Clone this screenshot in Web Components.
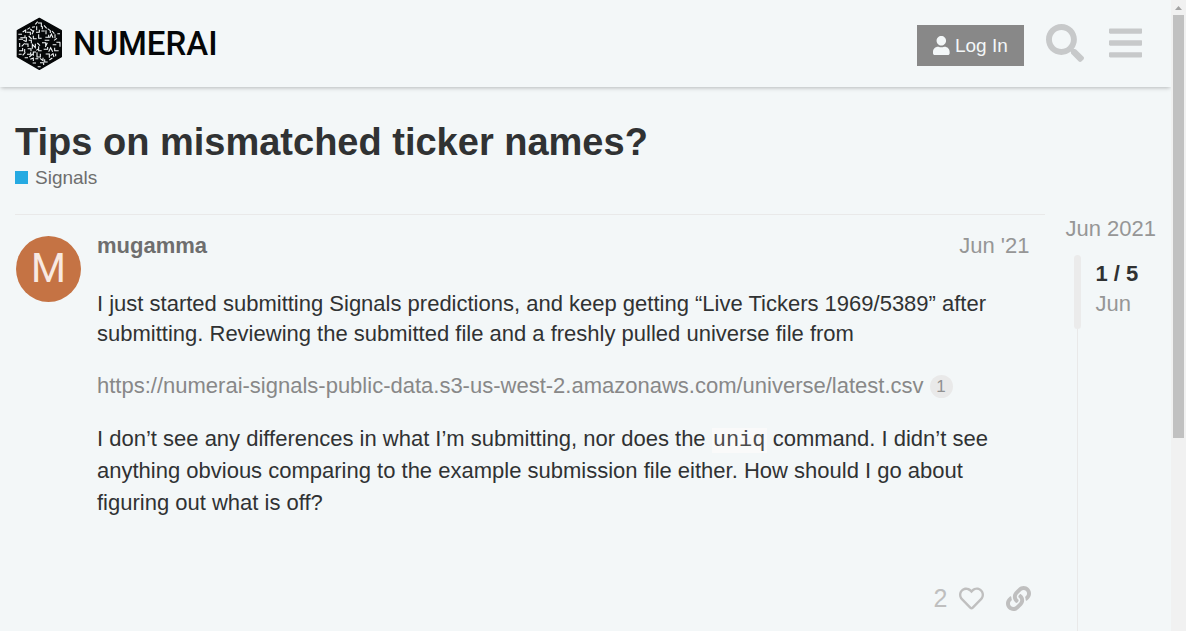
<!DOCTYPE html>
<html lang="en">
<head>
<meta charset="utf-8">
<title>Tips on mismatched ticker names? - Numerai Forum</title>
<style>
  html, body { margin: 0; height: 100%; }
  body {
    --primary: #303233;
    --medium: #969696;
    --rule: #e9e9e9;
    --secondary: #f3f7f8;
    background: var(--secondary);
    color: var(--primary);
    font: 22px/30px "Liberation Sans", Arial, sans-serif;
    overflow: hidden;
  }
  topic-post .tall { line-height: 32px; }
  topic-post code { padding: 0 1px; background: #fafafa; color: #4d4d4d; font: 22px/24px "Liberation Mono", monospace; }
</style>
</head>
<body>
<forum-app>
  <forum-header slot="header"></forum-header>
  <topic-title slot="title" category="Signals">Tips on mismatched ticker names?</topic-title>
  <topic-post slot="posts" author="mugamma" date="Jun '21" likes="2">
    <p>I just started submitting Signals predictions, and keep getting “Live Tickers 1969/5389” after submitting. Reviewing the submitted file and a freshly pulled universe file from</p>
    <p><counted-link href="https://numerai-signals-public-data.s3-us-west-2.amazonaws.com/universe/latest.csv" clicks="1"></counted-link></p>
    <p class="tall">I don’t see any differences in what I’m submitting, nor does the <code>uniq</code> command. I didn’t see anything obvious comparing to the example submission file either. How should I go about figuring out what is off?</p>
  </topic-post>
  <topic-timeline slot="timeline" start="Jun 2021" position="1 / 5" current="Jun"></topic-timeline>
</forum-app>

<script>
const ICONS = {
  user: ['0 0 448 512', 'M224 256c70.7 0 128-57.3 128-128S294.7 0 224 0 96 57.3 96 128s57.3 128 128 128zm89.6 32h-16.7c-22.2 10.2-46.9 16-72.9 16s-50.6-5.8-72.9-16h-16.7C60.2 288 0 348.2 0 422.4V464c0 26.5 21.5 48 48 48h352c26.5 0 48-21.5 48-48v-41.6c0-74.2-60.2-134.4-134.4-134.4z'],
  search: ['0 0 512 512', 'M505 442.7L405.3 343c-4.5-4.5-10.6-7-17-7H372c27.6-35.3 44-79.7 44-128C416 93.1 322.9 0 208 0S0 93.1 0 208s93.1 208 208 208c48.3 0 92.7-16.4 128-44v16.3c0 6.4 2.5 12.5 7 17l99.7 99.7c9.4 9.4 24.6 9.4 33.9 0l28.3-28.3c9.4-9.4 9.4-24.6.1-34zM208 336c-70.7 0-128-57.2-128-128 0-70.7 57.2-128 128-128 70.7 0 128 57.2 128 128 0 70.7-57.2 128-128 128z'],
  bars: ['0 0 448 512', 'M16 132h416c8.837 0 16-7.163 16-16V76c0-8.837-7.163-16-16-16H16C7.163 60 0 67.163 0 76v40c0 8.837 7.163 16 16 16zm0 160h416c8.837 0 16-7.163 16-16v-40c0-8.837-7.163-16-16-16H16c-8.837 0-16 7.163-16 16v40c0 8.837 7.163 16 16 16zm0 160h416c8.837 0 16-7.163 16-16v-40c0-8.837-7.163-16-16-16H16c-8.837 0-16 7.163-16 16v40c0 8.837 7.163 16 16 16z'],
  heart: ['0 0 512 512', 'M458.4 64.3C400.6 15.7 311.3 23 256 79.3 200.7 23 111.4 15.6 53.6 64.3-21.6 127.6-10.6 230.8 43 285.5l175.4 178.7c10 10.2 23.4 15.9 37.6 15.9 14.3 0 27.6-5.6 37.6-15.8L469 285.6c53.5-54.7 64.7-157.9-10.6-221.3zm-23.6 187.5L259.4 430.5c-2.4 2.4-4.4 2.4-6.8 0L77.2 251.8c-36.5-37.2-43.9-107.6 7.3-150.7 38.9-32.7 98.9-27.8 136.5 10.5l35 35.7 35-35.7c37.8-38.5 97.8-43.2 136.5-10.6 51.1 43.1 43.5 113.9 7.3 150.8z'],
  link: ['0 0 512 512', 'M326.612 185.391c59.747 59.809 58.927 155.698.36 214.59-.11.12-.24.25-.36.37l-67.2 67.2c-59.27 59.27-155.699 59.262-214.96 0-59.27-59.26-59.27-155.7 0-214.96l37.106-37.106c9.84-9.84 26.786-3.3 27.294 10.606.648 17.722 3.826 35.527 9.69 52.721 1.986 5.822.567 12.262-3.783 16.612l-13.087 13.087c-28.026 28.026-28.905 73.66-1.155 101.96 28.024 28.579 74.086 28.749 102.325.51l67.2-67.19c28.191-28.191 28.073-73.757 0-101.83-3.701-3.694-7.429-6.564-10.341-8.569a16.037 16.037 0 0 1-6.947-12.606c-.396-10.567 3.348-21.456 11.698-29.806l21.054-21.055c5.521-5.521 14.182-6.199 20.584-1.731a152.482 152.482 0 0 1 20.522 17.197zM467.547 44.449c-59.261-59.262-155.69-59.27-214.96 0l-67.2 67.2c-.12.12-.25.25-.36.37-58.566 58.892-59.387 154.781.36 214.59a152.454 152.454 0 0 0 20.521 17.196c6.402 4.468 15.064 3.789 20.584-1.731l21.054-21.055c8.35-8.35 12.094-19.239 11.698-29.806a16.037 16.037 0 0 0-6.947-12.606c-2.912-2.005-6.64-4.875-10.341-8.569-28.073-28.073-28.191-73.639 0-101.83l67.2-67.19c28.239-28.239 74.3-28.069 102.325.51 27.75 28.3 26.872 73.934-1.155 101.96l-13.087 13.087c-4.35 4.35-5.769 10.79-3.783 16.612 5.864 17.194 9.042 34.999 9.69 52.721.509 13.906 17.454 20.446 27.294 10.606l37.106-37.106c59.271-59.259 59.271-155.699.001-214.959z']
};

class BaseElement extends HTMLElement {
  connectedCallback() {
    if (!this.shadowRoot) this.attachShadow({ mode: 'open' }).innerHTML = this.render();
  }
  attr(name) { return this.getAttribute(name) || ''; }
}

customElements.define('forum-icon', class extends BaseElement {
  render() {
    const [box, d] = ICONS[this.attr('name')];
    return `<style>
      :host { display: block; }
      svg { display: block; height: 100%; width: auto; fill: currentColor; }
    </style><svg viewBox="${box}" aria-hidden="true"><path d="${d}"/></svg>`;
  }
});

customElements.define('forum-logo', class extends BaseElement {
  render() {
    return `<style>
      :host { display: block; }
      a { display: flex; align-items: center; gap: 10px; color: #050708; text-decoration: none;
          font: 500 33px/40px Roboto, "Liberation Sans", sans-serif; }
      svg { display: block; width: 47px; height: 53px; }
    </style>
    <a href="/"><svg viewBox="18 16 141 159" aria-hidden="true">
      <path fill="#050708" stroke="#050708" stroke-width="4" stroke-linejoin="round" d="M88 20L154 57V135L88 173L22 135V57Z"/>
      <path fill="none" stroke="#f3f7f8" stroke-width="3.2" d="
        M76 38l7-8M84 34h10v12M66 47l9-2M80 44v12M97 44v9M52 53l8-5M61 52l9 8M102 41l8 9
        M38 61l9-6v9M50 62h11v8M72 56l-6 12M78 62h10v-8M94 58h10M108 56v12M113 51l8 6v7M126 58l7 8
        M25 68h11M31 78h14v-7M49 76v12M56 73l9 9M70 72v9h10M86 68v12h9M106 77h10v-8M119 78l5-11 5 11M135 68v12M142 66h8
        M26 83h13M40 86l10 4M56 86h8v9M104 86h14M132 86l9-6M139 92h12M150 92v13
        M29 94v12M35 104l9-9M45 97h9v9M67 111V98l9 10V96M82 94l8 8M96 93h11v9M112 93l-6 13M128 99h11
        M27 117h11v-8M44 112v10M53 111h10v8M79 116l8-6M86 104v13h9M101 113h12v-7M116 120l6-12 6 12M134 108v9h12
        M26 128h9M38 131l8-9M51 128h11v-6M58 136l10-9M70 132V121h8M81 122v14h10v-10M107 127h11v11M122 132l7-6 3 10M137 126v8
        M44 138h10M61 143l9-4v9M76 141h9M90 140l9 7v-9M104 143v8h9M118 145l9-6M68 154h10M90 153h11v7M83 165h9"/>
    </svg><span>NUMERAI</span></a>`;
  }
});

customElements.define('forum-header', class extends BaseElement {
  render() {
    return `<style>
      :host { display: block; box-shadow: 0 2px 4px -1px rgba(0,0,0,.25); }
      header { display: flex; align-items: center; justify-content: space-between; height: 87px; padding: 0 29px 0 16px; }
      nav { display: flex; align-items: flex-end; gap: 22px; padding-top: 3px; }
      button { border: 0; margin: 0; padding: 0; background: none; color: #c7c9ca; cursor: pointer;
               font: 19px/25px "Liberation Sans", Arial, sans-serif; }
      .login { display: flex; align-items: center; gap: 5px; padding: 8px 16px; background: #888; color: var(--secondary); }
      .login forum-icon { height: 19px; }
      .tool { padding-bottom: 4px; }
      .tool forum-icon { height: 38px; }
      .menu { padding-left: 3px; }
    </style>
    <header><forum-logo></forum-logo>
      <nav>
        <button class="login"><forum-icon name="user"></forum-icon>Log In</button>
        <button class="tool" aria-label="Search"><forum-icon name="search"></forum-icon></button>
        <button class="tool menu" aria-label="Menu"><forum-icon name="bars"></forum-icon></button>
      </nav>
    </header>`;
  }
});

customElements.define('topic-title', class extends BaseElement {
  render() {
    return `<style>
      :host { display: block; }
      h1 { margin: 0; font-size: 38px; line-height: 46px; font-weight: bold; }
      a { display: flex; width: fit-content; align-items: center; gap: 7px; color: #6e6e6e; text-decoration: none; font-size: 19px; line-height: 25px; }
      i { width: 13px; height: 13px; background: #25aae2; }
    </style>
    <h1><slot></slot></h1><a href="/c/signals"><i></i>${this.attr('category')}</a>`;
  }
});

customElements.define('counted-link', class extends BaseElement {
  render() {
    return `<style>
      :host { display: inline-flex; align-items: center; gap: 6px; vertical-align: top; }
      a { color: #888; text-decoration: none; }
      span { min-width: 23px; border-radius: 12px; background: #e9e9e9; color: #919191; text-align: center; font-size: 17px; line-height: 23px; }
    </style>
    <a href="${this.attr('href')}">${this.attr('href')}</a><span>${this.attr('clicks')}</span>`;
  }
});

customElements.define('topic-post', class extends BaseElement {
  render() {
    return `<style>
      :host { display: block; border-top: 1px solid var(--rule); }
      article { display: flex; gap: 16px; padding: 16px 14px 0 1px; }
      .avatar { flex: none; width: 65px; height: 66px; margin-top: 5px; border-radius: 50%; background: #c57344; color: #f8e9e1;
                text-align: center; font: 40px/66px Roboto, sans-serif; }
      .body { flex: 1; min-width: 0; }
      .meta { display: flex; justify-content: space-between; padding-right: 2px; color: var(--medium); }
      .meta a { color: inherit; text-decoration: none; }
      .meta .name { color: #6e6e6e; font-weight: bold; }
      .cooked { padding: 28px 0 64px; }
      ::slotted(p) { margin: 0 0 22px; }
      ::slotted(p:last-child) { margin: 0; }
      .actions { display: flex; justify-content: flex-end; align-items: center; gap: 22px; color: #bfbfbf; }
      button { border: 0; margin: 0; padding: 0; background: none; color: inherit; cursor: pointer;
               display: flex; align-items: center; gap: 12px; font: 25px/30px "Liberation Sans", Arial, sans-serif; }
      .actions forum-icon { height: 25px; }
    </style>
    <article>
      <div class="avatar">M</div>
      <div class="body">
        <div class="meta"><a class="name" href="/u/${this.attr('author')}">${this.attr('author')}</a><a href="#post_1">${this.attr('date')}</a></div>
        <div class="cooked"><slot></slot></div>
        <div class="actions">
          <button aria-label="Like">${this.attr('likes')}<forum-icon name="heart"></forum-icon></button>
          <button aria-label="Share"><forum-icon name="link"></forum-icon></button>
        </div>
      </div>
    </article>`;
  }
});

customElements.define('topic-timeline', class extends BaseElement {
  render() {
    return `<style>
      :host { display: flex; flex-direction: column; color: var(--medium); white-space: nowrap; }
      a { color: inherit; text-decoration: none; }
      .track { flex: 1; display: flex; flex-direction: column; margin: 11px 0 0 9px; }
      .scroller { display: flex; gap: 14px; height: 74px; }
      .handle { width: 7px; border-radius: 4px; background: #ebebeb; }
      .label { padding-top: 4px; }
      strong { display: block; color: var(--primary); }
      .line { flex: 1; width: 1px; margin-left: 3px; background: var(--rule); }
    </style>
    <a href="#start">${this.attr('start')}</a>
    <div class="track">
      <div class="scroller"><div class="handle"></div><div class="label"><strong>${this.attr('position')}</strong>${this.attr('current')}</div></div>
      <div class="line"></div>
    </div>`;
  }
});

customElements.define('page-scrollbar', class extends BaseElement {
  render() {
    return `<style>
      :host { display: flex; flex-direction: column; align-items: center; background: #f1f1f1; }
      svg { display: block; width: 15px; height: 15px; flex: none; }
      .thumb { width: 11px; height: 67%; background: #c1c1c1; }
    </style>
    <svg viewBox="0 0 15 15" aria-hidden="true"><path fill="#a3a3a3" d="M4 10L7.500 6L11 10Z"/></svg>
    <div class="thumb"></div>`;
  }
});

customElements.define('forum-app', class extends BaseElement {
  render() {
    return `<style>
      :host { display: grid; grid-template-columns: minmax(0, 1fr) 15px; height: 100vh; overflow: hidden; }
      .page { display: flex; flex-direction: column; min-height: 0; overflow: hidden; }
      main { flex: 1; display: flex; flex-direction: column; gap: 24px; padding: 32px 15px 0; }
      .topic { flex: 1; display: flex; gap: 20px; }
      .posts { flex: 1; min-width: 0; }
    </style>
    <div class="page">
      <slot name="header"></slot>
      <main>
        <slot name="title"></slot>
        <div class="topic"><div class="posts"><slot name="posts"></slot></div><slot name="timeline"></slot></div>
      </main>
    </div>
    <page-scrollbar></page-scrollbar>`;
  }
});
</script>
</body>
</html>
